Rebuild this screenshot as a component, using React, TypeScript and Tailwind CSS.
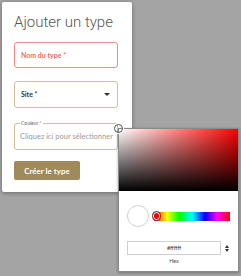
import { useState } from "react";

export default function App() {
	const [hex] = useState("#ffffff");

	return (
		<div className="relative w-[241px] h-[276px] bg-[#a4a4a4] overflow-hidden" style={{ fontFamily: "Lato, 'Open Sans', sans-serif" }}>
			{/* dialog */}
			<div className="ml-[2px] mt-[2px] w-[130px] h-[190px] bg-white rounded-[2px] shadow-[0_1px_4px_rgba(0,0,0,0.35)] pl-[12px] pr-[14px] pt-[10px]">
				<h2 className="h-[20px] text-[15px] leading-[20px] text-[#555] font-light whitespace-nowrap" style={{ fontFamily: "Roboto, sans-serif" }}>
					Ajouter un type
				</h2>

				<div className="mt-[10px] h-[26px] border border-[#f28b8b] rounded-[3px] flex items-center px-[6px]">
					<span className="text-[7px] font-bold text-[#f06868]">Nom du type *</span>
				</div>

				<div className="mt-[13px] h-[27px] border border-[#cdbf9c] rounded-[3px] flex items-center justify-between pl-[6px] pr-[7px]">
					<span className="text-[7px] font-bold text-[#333]">Site *</span>
					<span className="w-0 h-0 border-l-[3px] border-r-[3px] border-t-[3px] border-l-transparent border-r-transparent border-t-[#333]" />
				</div>

				<div className="relative mt-[15px] h-[27px] border border-[#cdbf9c] rounded-[3px] flex items-center pl-[5px]">
					<span className="absolute left-[5px] -top-[4px] bg-white px-[1px] text-[5px] leading-[7px] text-[#666] whitespace-nowrap">
						Couleur <span className="text-[#e83e8c]">*</span>
					</span>
					<span className="block overflow-hidden whitespace-nowrap text-[7.5px] text-[#9a9a9a]">Cliquez ici pour sélectionner</span>
				</div>

				<button className="mt-[11px] w-[66px] h-[19px] bg-[#a08a5c] rounded-[2px] text-white text-[8px] font-bold flex items-center justify-center">
					Créer le type
				</button>
			</div>

			{/* color picker popover */}
			<div className="absolute left-[118px] top-[128px] w-[121px] h-[144px] bg-white border border-[#8a8a8a] shadow-[0_1px_3px_rgba(0,0,0,0.3)]">
				<div className="relative h-[62px] bg-[#ff0000]">
					<div className="absolute inset-0 bg-gradient-to-r from-white to-transparent" />
					<div className="absolute inset-0 bg-gradient-to-t from-black to-transparent" />
					<div className="absolute -left-[5px] -top-[5px] w-[9px] h-[9px] rounded-full border border-[#555] bg-transparent shadow-[0_0_0_1px_white]" />
				</div>

				<div className="flex items-center gap-[5px] pl-[8px] pr-[8px] mt-[14px]">
					<div className="w-[22px] h-[22px] rounded-full border border-[#cfcfcf] bg-white shrink-0" />
					<div className="relative flex-1 h-[9px] bg-[linear-gradient(to_right,#f00_0%,#ff0_17%,#0f0_33%,#0ff_50%,#00f_67%,#f0f_83%,#f00_100%)]">
						<div className="absolute -left-[2px] -top-[0.5px] w-[9px] h-[10px] rounded-full border border-[#444] bg-[#f00] shadow-[inset_0_0_0_1px_white]" />
					</div>
				</div>

				<div className="flex items-center pl-[8px] pr-[5px] mt-[14px]">
					<div className="w-[94px] h-[14px] border border-[#cfcfcf] flex items-center justify-center text-[5.5px] text-[#333]">
						{hex}
					</div>
					<div className="ml-[4px] flex flex-col items-center gap-[1px]">
						<span className="w-0 h-0 border-l-[2.5px] border-r-[2.5px] border-b-[3px] border-l-transparent border-r-transparent border-b-[#333]" />
						<span className="w-0 h-0 border-l-[2.5px] border-r-[2.5px] border-t-[3px] border-l-transparent border-r-transparent border-t-[#333]" />
					</div>
				</div>
				<div className="w-[94px] ml-[8px] mt-[2px] text-center text-[5.5px] text-[#555]">Hex</div>
			</div>
		</div>
	);
}
